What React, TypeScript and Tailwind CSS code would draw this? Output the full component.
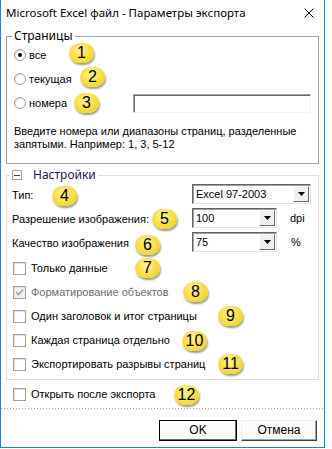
import React from 'react';

const font = 'font-["Liberation_Sans",Arial,sans-serif]';

// numbered callouts laid over the dialog
const badges = [
  { n: '1', pos: 'left-[69px] top-[43px]' },
  { n: '2', pos: 'left-[80px] top-[67px]' },
  { n: '3', pos: 'left-[74px] top-[93px]' },
  { n: '4', pos: 'left-[52px] top-[186px]' },
  { n: '5', pos: 'left-[152px] top-[209px]' },
  { n: '6', pos: 'left-[135px] top-[235px]' },
  { n: '7', pos: 'left-[135px] top-[258px]' },
  { n: '8', pos: 'left-[183px] top-[282px]' },
  { n: '9', pos: 'left-[218px] top-[306px]' },
  { n: '10', pos: 'left-[182px] top-[331px]' },
  { n: '11', pos: 'left-[218px] top-[354px]' },
  { n: '12', pos: 'left-[174px] top-[385px]' },
];

function Badge({ n, pos }: { n: string; pos: string }) {
  return (
    <div
      className={`absolute ${pos} w-[25px] h-[20px] rounded-full flex items-center justify-center bg-[radial-gradient(circle_at_45%_35%,#fff3a0_0%,#f9dc3e_55%,#e9c520_100%)] shadow-[1px_2px_2px_rgba(0,0,0,0.4)] text-[16px] leading-none text-black ${font}`}
    >
      {n}
    </div>
  );
}

function Radio({ checked, label }: { checked?: boolean; label: string }) {
  return (
    <div className="flex items-center gap-[3px]">
      <span className="w-[12px] h-[12px] rounded-full border border-[#9a9a9a] bg-white flex items-center justify-center shadow-[inset_1px_1px_0_#e3e3e3]">
        {checked && <span className="w-[4px] h-[4px] rounded-full bg-black" />}
      </span>
      <span>{label}</span>
    </div>
  );
}

function Check({ label, checked, disabled }: { label: string; checked?: boolean; disabled?: boolean }) {
  return (
    <div className="h-[24px] flex items-center gap-[5px]">
      <span
        className={`w-[13px] h-[13px] border border-[#a0a0a0] flex items-center justify-center ${disabled ? 'bg-[#f0f0f0]' : 'bg-white'} shadow-[inset_1px_1px_0_#e3e3e3]`}
      >
        {checked && (
          <svg width="9" height="8" viewBox="0 0 9 8">
            <path d="M1 4l2.5 2.5L8 1.5" fill="none" stroke="#a0a0a0" strokeWidth="1.6" />
          </svg>
        )}
      </span>
      <span className={disabled ? 'text-[#6d6d6d]' : 'text-black'}>{label}</span>
    </div>
  );
}

function Select({ value, width }: { value: string; width: string }) {
  return (
    <div
      className={`${width} h-[20px] flex items-stretch bg-white border border-t-[#646464] border-l-[#646464] border-b-[#e3e3e3] border-r-[#e3e3e3] shadow-[inset_1px_1px_0_#a0a0a0]`}
    >
      <span className="flex-1 pl-[3px] pt-[1px] flex items-center">{value}</span>
      <span className="w-[16px] my-[1px] mr-[1px] bg-[#f0f0f0] border border-t-white border-l-white border-b-[#696969] border-r-[#696969] flex items-center justify-center">
        <svg width="7" height="4" viewBox="0 0 7 4">
          <path d="M0 0h7L3.5 4z" fill="#000" />
        </svg>
      </span>
    </div>
  );
}

export default function App() {
  return (
    <div className={`relative w-[332px] h-[449px] bg-white text-[11px] leading-[13px] text-black ${font}`}>
      <div className="w-[325px] h-[448px] flex flex-col border-l border-r border-b border-[#1883d7]">
        {/* title bar */}
        <div className="h-[29px] flex items-start justify-between pl-[5px]">
          <span className='pt-[5px] text-[11.5px] leading-[16px] font-["Noto_Sans",sans-serif]'>
            Microsoft Excel файл - Параметры экспорта
          </span>
          <svg className="mt-[8px] mr-[10px]" width="10" height="10" viewBox="0 0 10 10">
            <path d="M0.5 0.5l9 9M9.5 0.5l-9 9" stroke="#000" strokeWidth="1" />
          </svg>
        </div>

        <div className="px-[5px] flex flex-col">
          {/* pages */}
          <fieldset className="border border-[#a0a0a0] pb-[12px]">
            <legend className='ml-[5px] px-[2px] text-[12px] leading-[14px] font-["Noto_Sans",sans-serif]'>Страницы</legend>
            <div className="pl-[7px] flex flex-col">
              <div className="h-[24px] flex items-center">
                <Radio checked label="все" />
              </div>
              <div className="h-[24px] flex items-center">
                <Radio label="текущая" />
              </div>
              <div className="h-[24px] flex items-center">
                <Radio label="номера" />
                <div className="ml-auto mr-[7px] w-[178px] h-[19px] bg-white border border-t-[#a0a0a0] border-l-[#a0a0a0] border-b-[#f0f0f0] border-r-[#f0f0f0] shadow-[inset_1px_1px_0_#696969]" />
              </div>
              <p className="mt-[10px] pr-[6px]">
                Введите номера или диапазоны страниц, разделенные запятыми. Например: 1, 3, 5-12
              </p>
            </div>
          </fieldset>

          {/* settings */}
          <fieldset className="mt-[4px] border border-[#dcdcdc] pb-[3px]">
            <legend className='ml-[3px] px-[2px] text-[12px] leading-[14px] font-["Noto_Sans",sans-serif]'>
              <span className="flex items-center">
                <span className="w-[10px] h-[10px] border border-[#a0a0a0] flex items-center justify-center">
                  <span className="w-[6px] h-px bg-[#404040]" />
                </span>
                <span className="ml-[11px] text-[#2b0f4f]">Настройки</span>
              </span>
            </legend>
            <div className="flex flex-col">
              <div className="h-[24px] flex items-center pl-[5px]">
                <span className="w-[180px] pt-[3px]">Тип:</span>
                <Select value="Excel 97-2003" width="w-[119px]" />
              </div>
              <div className="h-[24px] flex items-center pl-[5px]">
                <span className="w-[180px] pt-[3px]">Разрешение изображения:</span>
                <Select value="100" width="w-[85px]" />
                <span className="ml-[13px]">dpi</span>
              </div>
              <div className="h-[24px] flex items-center pl-[5px]">
                <span className="w-[180px] pt-[3px]">Качество изображения</span>
                <Select value="75" width="w-[85px]" />
                <span className="ml-[14px]">%</span>
              </div>
              <div className="mt-[2px] pl-[6px] flex flex-col">
                <Check label="Только данные" />
                <Check label="Форматирование объектов" checked disabled />
                <Check label="Один заголовок и итог страницы" />
                <Check label="Каждая страница отдельно" />
                <Check label="Экспортировать разрывы страниц" />
              </div>
            </div>
          </fieldset>

          <div className="mt-[2px] pl-[7px]">
            <Check label="Открыть после экспорта" />
          </div>
        </div>

        <div className="mt-[2px] h-px bg-[repeating-linear-gradient(to_right,#a0a0a0_0_1px,transparent_1px_3px)]" />

        <div className="mt-[11px] flex justify-end gap-[4px] pr-[7px] text-[12px]">
          <button className="w-[78px] h-[21px] border border-black bg-[#fbfbfb] shadow-[inset_-1px_-1px_0_#696969,inset_1px_1px_0_#ffffff]">
            OK
          </button>
          <button className="w-[76px] h-[21px] bg-[#fbfbfb] border border-t-[#f0f0f0] border-l-[#f0f0f0] border-b-[#404040] border-r-[#404040] shadow-[inset_-1px_-1px_0_#a0a0a0]">
            Отмена
          </button>
        </div>
      </div>

      {badges.map((b) => (
        <Badge key={b.n} n={b.n} pos={b.pos} />
      ))}
    </div>
  );
}
